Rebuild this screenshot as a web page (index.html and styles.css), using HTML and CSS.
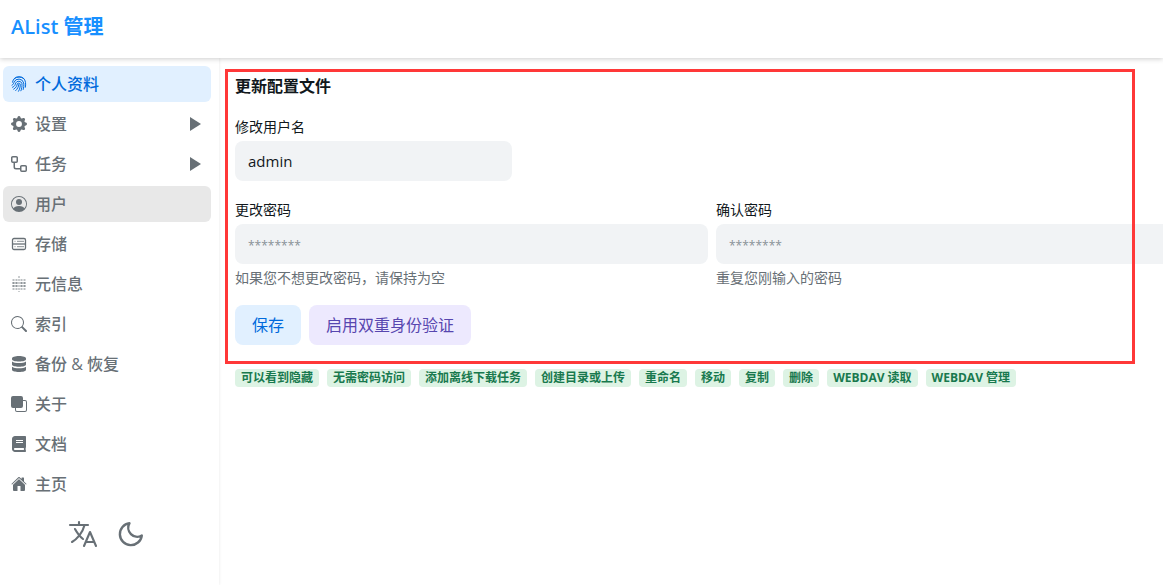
FILE: index.html
```html
<!DOCTYPE html>
<html lang="zh-CN">
<head>
  <meta charset="UTF-8" />
  <meta name="viewport" content="width=device-width, initial-scale=1" />
  <title>AList 管理</title>

  <link rel="stylesheet" href="styles.css">
</head>

<body>
  <header class="header">
    <h1 class="brand"><a href="#">AList 管理</a></h1>
  </header>

  <div class="layout">
    <aside class="sidebar">
      <nav class="menu">
        <a class="menu-item active" href="#">
          <svg class="icon" viewBox="0 0 16 16" fill="none" stroke="currentColor" stroke-width="1" stroke-linecap="round">
            <path d="M3.4 2.6A7 7 0 0 1 12.8 2.6M1.5 6.2A6.6 6.6 0 0 1 14.5 6.4c.2 1.700.2 3.300-.1 4.800" />
            <path d="M1 9.2C2.500 8.500 2.600 7.400 3 6.300a5.100 5.100 0 0 1 9.700.7c.3 2.300.1 4.500-.5 6.500" />
            <path d="M1.500 11.300C4 10.300 4.200 8.700 4.600 7.100a3.500 3.500 0 0 1 6.300.2c.3 2.700 0 5.200-1 7.500" />
            <path d="M2.700 13.200C5.300 11.800 5.900 9.700 6.300 7.700a1.800 1.800 0 0 1 2.900.3c.2 2.700-.4 5.200-1.700 7.300" />
            <path d="M4.700 14.600C6.600 12.900 7.500 10.800 7.800 8.500" />
          </svg>
          <span>个人资料</span>
        </a>
        <a class="menu-item" href="#">
          <svg class="icon" viewBox="0 0 16 16" fill="currentColor"><path d="M9.405 1.05c-.413-1.4-2.397-1.4-2.81 0l-.1.34a1.464 1.464 0 0 1-2.105.872l-.31-.17c-1.283-.698-2.686.705-1.987 1.987l.169.311c.446.82.023 1.841-.872 2.105l-.34.1c-1.4.413-1.4 2.397 0 2.81l.34.1a1.464 1.464 0 0 1 .872 2.105l-.17.31c-.698 1.283.705 2.686 1.987 1.987l.311-.169a1.464 1.464 0 0 1 2.105.872l.1.34c.413 1.4 2.397 1.4 2.81 0l.1-.34a1.464 1.464 0 0 1 2.105-.872l.31.17c1.283.698 2.686-.705 1.987-1.987l-.169-.311a1.464 1.464 0 0 1 .872-2.105l.34-.1c1.4-.413 1.4-2.397 0-2.81l-.34-.1a1.464 1.464 0 0 1-.872-2.105l.17-.31c.698-1.283-.705-2.686-1.987-1.987l-.311.169a1.464 1.464 0 0 1-2.105-.872l-.1-.34zM8 10.93a2.929 2.929 0 1 1 0-5.86 2.929 2.929 0 0 1 0 5.858z" /></svg>
          <span>设置</span>
          <svg class="icon caret" viewBox="0 0 16 16" fill="currentColor"><path d="M3 1v14l11-7z" /></svg>
        </a>
        <a class="menu-item" href="#">
          <svg class="icon" viewBox="0 0 16 16" fill="currentColor"><path d="M0 1.75C0 .784.784 0 1.75 0h3.5C6.216 0 7 .784 7 1.75v3.5A1.75 1.75 0 0 1 5.25 7H4v4a1 1 0 0 0 1 1h4v-1.25C9 9.784 9.784 9 10.75 9h3.5c.966 0 1.75.784 1.75 1.75v3.5A1.75 1.75 0 0 1 14.25 16h-3.5A1.75 1.75 0 0 1 9 14.25v-.75H5A2.5 2.5 0 0 1 2.5 11V7h-.75A1.75 1.75 0 0 1 0 5.25Zm1.75-.25a.25.25 0 0 0-.25.25v3.5c0 .138.112.25.25.25h3.5a.25.25 0 0 0 .25-.25v-3.5a.25.25 0 0 0-.25-.25Zm9 9a.25.25 0 0 0-.25.25v3.5c0 .138.112.25.25.25h3.5a.25.25 0 0 0 .25-.25v-3.5a.25.25 0 0 0-.25-.25Z" /></svg>
          <span>任务</span>
          <svg class="icon caret" viewBox="0 0 16 16" fill="currentColor"><path d="M3 1v14l11-7z" /></svg>
        </a>
        <a class="menu-item hovered" href="#">
          <svg class="icon" viewBox="0 0 16 16" fill="currentColor"><path d="M11 6a3 3 0 1 1-6 0 3 3 0 0 1 6 0z" /><path fill-rule="evenodd" d="M0 8a8 8 0 1 1 16 0A8 8 0 0 1 0 8zm8-7a7 7 0 0 0-5.468 11.37C3.242 11.226 4.805 10 8 10s4.757 1.225 5.468 2.37A7 7 0 0 0 8 1z" /></svg>
          <span>用户</span>
        </a>
        <a class="menu-item" href="#">
          <svg class="icon" viewBox="0 0 16 16" fill="none" stroke="currentColor">
            <rect x="1.5" y="2.5" width="13" height="11" rx="1.5" stroke-width="1.3" />
            <path d="M1.5 8h13" stroke-width="1.3" />
            <path d="M3.5 5.3h1M6 5.300h7M3.5 10.7h1M6 10.7h7" stroke-width=".8" />
          </svg>
          <span>存储</span>
        </a>
        <a class="menu-item" href="#">
          <svg class="icon" viewBox="0 0 16 16" fill="none" stroke="currentColor" stroke-width="2">
            <path d="M2.5 3v11M5.5 3v11M10.5 3v11M13.5 3v11" stroke-dasharray="2 1" opacity=".45" />
            <path d="M2.5 6v5M5.5 6v5M10.5 6v5M13.5 6v5" stroke-dasharray="2 1" opacity=".5" />
            <path d="M8 0v16" stroke-dasharray="2 1" opacity=".35" />
          </svg>
          <span>元信息</span>
        </a>
        <a class="menu-item" href="#">
          <svg class="icon" viewBox="0 0 16 16" fill="currentColor"><path d="M11.742 10.344a6.5 6.5 0 1 0-1.397 1.398h-.001c.03.04.062.078.098.115l3.85 3.85a1 1 0 0 0 1.415-1.414l-3.85-3.85a1.007 1.007 0 0 0-.115-.1zM12 6.5a5.5 5.5 0 1 1-11 0 5.5 5.5 0 0 1 11 0z" /></svg>
          <span>索引</span>
        </a>
        <a class="menu-item" href="#">
          <svg class="icon" viewBox="0 0 16 16" fill="currentColor">
            <path d="M1 2.3C1 1 4 0 8 0s7 1 7 2.3v1c0 1.300-3 2.300-7 2.300s-7-1-7-2.300z" />
            <path d="M1 5.5c1.5 1 4 1.5 7 1.5s5.500-.5 7-1.5v3c0 1.300-3 2.300-7 2.300s-7-1-7-2.300z" />
            <path d="M1 10.700c1.500 1 4 1.500 7 1.500s5.500-.5 7-1.500v3c0 1.300-3 2.300-7 2.300s-7-1-7-2.300z" />
          </svg>
          <span>备份 &amp; 恢复</span>
        </a>
        <a class="menu-item" href="#">
          <svg class="icon" viewBox="0 0 16 16" fill="currentColor"><path d="M0 2a2 2 0 0 1 2-2h8a2 2 0 0 1 2 2v2h2a2 2 0 0 1 2 2v8a2 2 0 0 1-2 2H6a2 2 0 0 1-2-2v-2H2a2 2 0 0 1-2-2V2zm5 10v2a1 1 0 0 0 1 1h8a1 1 0 0 0 1-1V6a1 1 0 0 0-1-1h-2v5a2 2 0 0 1-2 2H5z" /></svg>
          <span>关于</span>
        </a>
        <a class="menu-item" href="#">
          <svg class="icon" viewBox="0 0 448 512" fill="currentColor"><path d="M448 360V24c0-13.3-10.7-24-24-24H96C43 0 0 43 0 96v320c0 53 43 96 96 96h328c13.3 0 24-10.7 24-24v-16c0-7.5-3.5-14.3-8.9-18.7-4.2-15.4-4.2-59.3 0-74.7 5.4-4.3 8.9-11.1 8.9-18.6zM128 134c0-3.3 2.7-6 6-6h212c3.3 0 6 2.7 6 6v20c0 3.3-2.7 6-6 6H134c-3.3 0-6-2.7-6-6v-20zm0 64c0-3.3 2.7-6 6-6h212c3.3 0 6 2.7 6 6v20c0 3.3-2.7 6-6 6H134c-3.3 0-6-2.7-6-6v-20zm253.4 250H96c-17.7 0-32-14.3-32-32 0-17.6 14.4-32 32-32h285.4c-1.9 17.1-1.9 46.9 0 64z" /></svg>
          <span>文档</span>
        </a>
        <a class="menu-item" href="#">
          <svg class="icon" viewBox="0 0 512 512" fill="currentColor"><path d="M261.56 101.28a8 8 0 0 0-11.06 0L66.4 277.15a8 8 0 0 0-2.47 5.79L63.9 448a32 32 0 0 0 32 32H192a16 16 0 0 0 16-16V328a8 8 0 0 1 8-8h80a8 8 0 0 1 8 8v136a16 16 0 0 0 16 16h96.06a32 32 0 0 0 32-32V282.94a8 8 0 0 0-2.47-5.79z" /><path d="M490.91 244.15l-74.8-71.56V64a16 16 0 0 0-16-16h-48a16 16 0 0 0-16 16v32l-57.92-55.38C272.77 35.14 264.71 32 256 32c-8.68 0-16.72 3.14-22.14 8.63l-212.7 203.5c-6.22 6-7 15.87-1.34 22.37A16 16 0 0 0 43 267.56L250.5 69.28a8 8 0 0 1 11.06 0l207.52 198.28a16 16 0 0 0 22.59-.44c6.14-6.36 5.63-16.86-.76-22.97z" /></svg>
          <span>主页</span>
        </a>
      </nav>

      <div class="tools">
        <button class="tool" type="button" aria-label="语言">
          <svg viewBox="0 0 512 512" fill="none" stroke="currentColor" stroke-width="34" stroke-linecap="round" stroke-linejoin="round"><path d="M48 112h288M192 64v48M272 448l96-224 96 224M301.5 384h133M281.3 112S257 206 199 277 80 384 80 384M256 336s-35-27-72-75-56-85-56-85" /></svg>
        </button>
        <button class="tool" type="button" aria-label="深色模式">
          <svg viewBox="0 0 32 32" fill="none" stroke="currentColor" stroke-width="2.4" stroke-linecap="round" stroke-linejoin="round"><path d="M14.5 5.2A11 11 0 1 0 26.8 17.5A9 9 0 0 1 14.5 5.2z" /></svg>
        </button>
      </div>
    </aside>

    <main class="content">
      <form class="profile">
        <h2 class="title">更新配置文件</h2>

        <div class="field short">
          <label for="username">修改用户名</label>
          <input id="username" type="text" value="admin" />
        </div>

        <div class="passwords">
          <div class="field">
            <label for="password">更改密码</label>
            <input id="password" type="password" placeholder="********" />
            <p class="help">如果您不想更改密码，请保持为空</p>
          </div>
          <div class="field">
            <label for="confirm">确认密码</label>
            <input id="confirm" type="password" placeholder="********" />
            <p class="help">重复您刚输入的密码</p>
          </div>
        </div>

        <div class="actions">
          <button class="btn save" type="button">保存</button>
          <button class="btn twofa" type="button">启用双重身份验证</button>
        </div>
      </form>

      <div class="badges">
        <span class="badge">可以看到隐藏</span>
        <span class="badge">无需密码访问</span>
        <span class="badge">添加离线下载任务</span>
        <span class="badge">创建目录或上传</span>
        <span class="badge">重命名</span>
        <span class="badge">移动</span>
        <span class="badge">复制</span>
        <span class="badge">删除</span>
        <span class="badge">WEBDAV 读取</span>
        <span class="badge">WEBDAV 管理</span>
      </div>
    </main>
  </div>
</body>
</html>
```
FILE: styles.css
```css
* {
  box-sizing: border-box;
}

body {
  margin: 0;
  min-height: 100vh;
  display: flex;
  flex-direction: column;
  overflow: hidden;
  font-family: 'Open Sans', 'Noto Sans CJK SC', sans-serif;
  font-size: 16px;
  line-height: 24px;
  color: #11181c;
  background-color: #fff;
}

h1, h2, p {
  margin: 0;
}

a {
  color: inherit;
  text-decoration: none;
}

/* === Top bar === */
.header {
  position: relative;
  z-index: 1;
  display: flex;
  align-items: center;
  height: 58px;
  padding: 0 11px 4px;
  background-color: #fff;
  box-shadow: 0 1px 5px rgba(0, 0, 0, 0.2);
}

.brand {
  font-size: 20px;
  font-weight: 600;
  color: #1890ff;
}

.layout {
  flex: 1;
  display: flex;
}

/* === Sidebar === */
.sidebar {
  flex: none;
  width: 219px;
  padding: 8px 8px 8px 3px;
  box-shadow: 0 0 3px rgba(0, 0, 0, 0.1);
}

.menu {
  display: flex;
  flex-direction: column;
  gap: 4px;
}

.menu-item {
  display: flex;
  align-items: center;
  gap: 8px;
  height: 36px;
  padding: 0 8px;
  border-radius: 6px;
  font-weight: 500;
  color: #687076;
}

.menu-item.active {
  background-color: #e1f0ff;
  color: #006adc;
}

.menu-item.hovered,
.menu-item:hover {
  background-color: #e8e8e8;
}

.icon {
  flex: none;
  width: 16px;
  height: 16px;
}

.caret {
  margin-left: auto;
}

.tools {
  display: flex;
  justify-content: center;
  gap: 16px;
  margin-top: 16px;
}

.tool {
  width: 32px;
  height: 32px;
  padding: 0;
  border: none;
  background: none;
  color: #687076;
  cursor: pointer;
}

.tool svg {
  display: block;
}

/* === Profile form === */
.content {
  flex: 1;
  min-width: 0;
  padding: 11px 28px 0 6px;
}

.profile {
  position: relative;
  padding: 5px 10px 19px;
}

/* red frame, drawn over the inputs */
.profile::after {
  content: "";
  position: absolute;
  inset: 0;
  border: 3px solid #ff3838;
  pointer-events: none;
}

.title {
  font-size: 16px;
  font-weight: 700;
}

.field {
  display: flex;
  flex-direction: column;
  margin-top: 19px;
  font-size: 14px;
  line-height: 20px;
}

.field.short {
  max-width: 277px;
}

.field input {
  height: 40px;
  margin-top: 4px;
  padding: 0 13px;
  border: none;
  border-radius: 8px;
  background-color: #f1f3f5;
  font-family: inherit;
  font-size: 15px;
  color: inherit;
}

.field input::placeholder {
  font-size: 12px;
  color: #889096;
}

.passwords {
  display: grid;
  grid-template-columns: repeat(2, minmax(473px, 1fr));
  gap: 8px;
}

.help {
  margin-top: 4px;
  color: #687076;
}

.actions {
  display: flex;
  gap: 8px;
  margin-top: 17px;
}

.btn {
  height: 40px;
  padding: 0 17px 2px;
  border: none;
  border-radius: 8px;
  font-family: inherit;
  font-size: 16px;
  cursor: pointer;
}

.save {
  background-color: #e1f0ff;
  color: #006adc;
}

.twofa {
  background-color: #ede9fe;
  color: #5746af;
}

/* === Permissions === */
.badges {
  display: flex;
  flex-wrap: wrap;
  gap: 8px;
  padding: 5px 10px;
}

.badge {
  padding: 0 6px;
  border-radius: 4px;
  background-color: #ddf3e4;
  font-size: 12px;
  font-weight: 700;
  line-height: 18px;
  color: #18794e;
}
```
